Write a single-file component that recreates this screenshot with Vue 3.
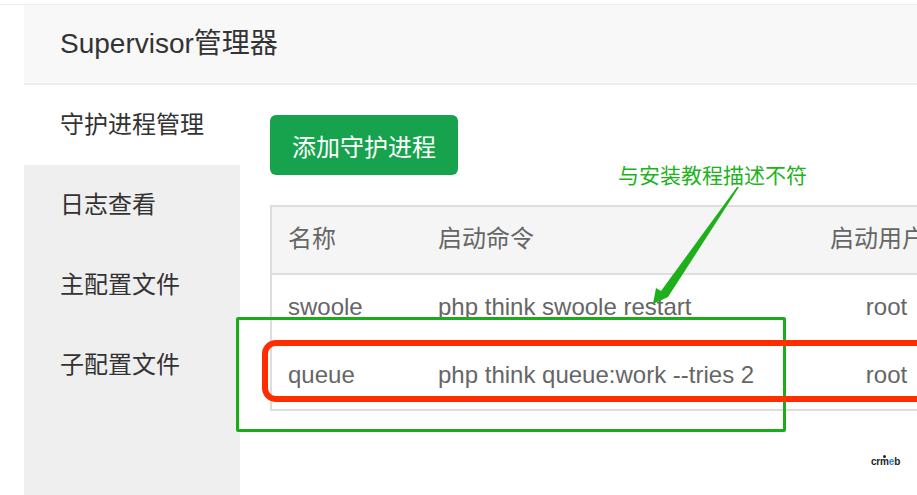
<script setup>
const menu = [
  { label: '守护进程管理', active: true },
  { label: '日志查看' },
  { label: '主配置文件' },
  { label: '子配置文件' }
]

const rows = [
  { name: 'swoole', cmd: 'php think swoole restart', user: 'root' },
  { name: 'queue', cmd: 'php think queue:work --tries 2', user: 'root' }
]
</script>

<template>
  <div class="page">
    <div class="panel">
      <div class="title">Supervisor管理器</div>
      <div class="body">
        <ul class="side">
          <li v-for="m in menu" :key="m.label" :class="{ on: m.active }">{{ m.label }}</li>
        </ul>
        <div class="main">
          <button class="add">添加守护进程</button>
          <table class="list">
            <thead>
              <tr>
                <th class="c-name">名称</th>
                <th class="c-cmd">启动命令</th>
                <th class="c-user">启动用户</th>
              </tr>
            </thead>
            <tbody>
              <tr v-for="r in rows" :key="r.name">
                <td>{{ r.name }}</td>
                <td>{{ r.cmd }}</td>
                <td class="c-user">{{ r.user }}</td>
              </tr>
            </tbody>
          </table>
        </div>
      </div>
    </div>

    <!-- annotations drawn over the screenshot -->
    <div class="note">与安装教程描述不符</div>
    <svg class="arrow" width="917" height="495" viewBox="0 0 917 495" aria-hidden="true">
      <polygon points="739,187 668,297 653,304 656,288 661,291 737,187" fill="#1eb01b" />
    </svg>
    <div class="box-green"></div>
    <div class="box-red"></div>
    <div class="logo">cr<span class="m">m</span><span class="e">e</span>b</div>
  </div>
</template>

<style>
html, body {
  margin: 0;
  background: #fff;
}
</style>

<style scoped>
.page {
  position: relative;
  width: 917px;
  height: 495px;
  overflow: hidden;
  padding-top: 4px;
  box-sizing: border-box;
  font-family: "Liberation Sans", "Noto Sans CJK SC", sans-serif;
  color: #666;
  background: #fff;
}
.panel {
  border-top: 1px solid #eee;
  padding-left: 24px;
}
.title {
  height: 78px;
  line-height: 78px;
  padding-left: 36px;
  font-size: 28px;
  color: #333;
  background: #f8f8f8;
  border-bottom: 2px solid #eee;
}
.body {
  display: flex;
  height: 410px;
}
.side {
  flex: 0 0 216px;
  margin: 0;
  padding: 0;
  list-style: none;
  background: #efefef;
}
.side li {
  height: 80px;
  line-height: 80px;
  padding-left: 36px;
  font-size: 24px;
  color: #333;
}
.side li.on {
  background: #fff;
}
.main {
  flex: 0 0 auto;
  padding: 30px 0 0 30px;
}
.add {
  display: block;
  width: 188px;
  height: 60px;
  padding: 0;
  border: 0;
  border-radius: 6px;
  background: #17a34e;
  color: #fff;
  font-family: inherit;
  font-size: 24px;
}
.list {
  width: 692px;
  margin-top: 30px;
  border-collapse: collapse;
  table-layout: fixed;
  border: 2px solid #ddd;
  font-size: 24px;
}
.list th,
.list td {
  box-sizing: border-box;
  padding-left: 16px;
}
.list th {
  height: 68px;
  padding-bottom: 8px;
  font-weight: 400;
  text-align: left;
  background: #f5f5f5;
  border-bottom: 2px solid #ddd;
}
.list td {
  height: 67px;
  padding-bottom: 3px;
}
.list tr:last-child td {
  height: 69px;
  padding-top: 1px;
  padding-bottom: 2px;
}
.c-name {
  width: 151px;
}
.c-cmd {
  width: 392px;
}
.list .c-user {
  padding-left: 0;
  text-align: center;
}
.list th.c-user {
  padding-right: 18px;
}
.note {
  position: absolute;
  left: 618px;
  top: 162px;
  font-size: 21px;
  line-height: 28px;
  color: #1db31d;
  white-space: nowrap;
}
.arrow {
  position: absolute;
  left: 0;
  top: 0;
}
.box-green {
  position: absolute;
  left: 236px;
  top: 317px;
  width: 544px;
  height: 109px;
  border: 3px solid #1aad19;
  border-radius: 2px;
}
.box-red {
  position: absolute;
  left: 262px;
  top: 340px;
  width: 700px;
  height: 50px;
  border: 6px solid #ff2d00;
  border-radius: 14px;
}
.logo {
  position: absolute;
  left: 871px;
  top: 455px;
  font-size: 10px;
  line-height: 14px;
  font-weight: 700;
  letter-spacing: -0.2px;
  color: #222;
}
.logo .m {
  position: relative;
}
.logo .m::before {
  content: "";
  position: absolute;
  left: 3px;
  top: -1px;
  width: 3px;
  height: 3px;
  border-radius: 50%;
  background: #222;
}
.logo .e {
  color: #1e88e5;
}
</style>
